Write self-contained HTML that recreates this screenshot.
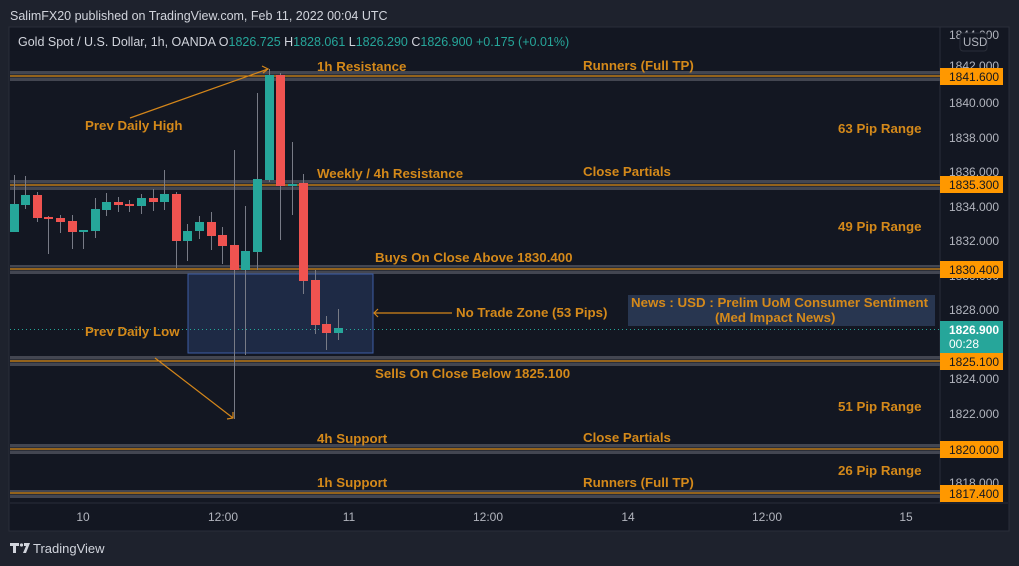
<!DOCTYPE html><html><head><meta charset="utf-8"><style>
body{margin:0;background:#1e222d;width:1019px;height:566px;overflow:hidden;font-family:"Liberation Sans",sans-serif}
svg{display:block}
</style></head><body>
<svg width="1019" height="566" xmlns="http://www.w3.org/2000/svg" font-family="Liberation Sans, sans-serif">
<rect width="1019" height="566" fill="#1e222d"/>
<text x="10" y="20" fill="#d1d4dc" font-size="12.5">SalimFX20 published on TradingView.com, Feb 11, 2022 00:04 UTC</text>
<rect x="9" y="27" width="1000" height="504" fill="#131722" stroke="#2a2e39"/>
<line x1="940" y1="27" x2="940" y2="503" stroke="#2a2e39"/>
<line x1="10" y1="503" x2="1008" y2="503" stroke="#2a2e39"/>
<text x="18" y="46" font-size="12.5" fill="#d1d4dc">Gold Spot / U.S. Dollar, 1h, OANDA  O<tspan fill="#26a69a">1826.725</tspan>  H<tspan fill="#26a69a">1828.061</tspan>  L<tspan fill="#26a69a">1826.290</tspan>  C<tspan fill="#26a69a">1826.900</tspan>  <tspan fill="#26a69a">+0.175 (+0.01%)</tspan></text>
<g>
<rect x="10" y="71" width="930" height="10" fill="#434651"/><rect x="10" y="74" width="930" height="4" fill="#2a2e39"/><line x1="10" y1="76" x2="940" y2="76" stroke="#ff9800"/>
<rect x="10" y="180" width="930" height="10" fill="#434651"/><rect x="10" y="183" width="930" height="4" fill="#2a2e39"/><line x1="10" y1="185" x2="940" y2="185" stroke="#ff9800"/>
<rect x="10" y="265" width="930" height="9" fill="#434651"/><rect x="10" y="267" width="930" height="4" fill="#2a2e39"/><line x1="10" y1="269" x2="940" y2="269" stroke="#ff9800"/>
<rect x="10" y="356" width="930" height="10" fill="#434651"/><rect x="10" y="359" width="930" height="4" fill="#2a2e39"/><line x1="10" y1="361" x2="940" y2="361" stroke="#ff9800"/>
<rect x="10" y="444" width="930" height="10" fill="#434651"/><rect x="10" y="447" width="930" height="4" fill="#2a2e39"/><line x1="10" y1="449" x2="940" y2="449" stroke="#ff9800"/>
<rect x="10" y="490" width="930" height="8" fill="#434651"/><rect x="10" y="492" width="930" height="3" fill="#2a2e39"/><line x1="10" y1="493" x2="940" y2="493" stroke="#ff9800"/>
</g>
<rect x="188" y="274" width="185" height="79" fill="#1e2a45" stroke="#3d5ea6"/>
<rect x="628" y="295" width="307" height="31" fill="#283650"/>
<line x1="10" y1="329.5" x2="940" y2="329.5" stroke="#26a69a" stroke-dasharray="1,3"/>
<g stroke="#787b86" stroke-width="1">
<line x1="14.5" y1="175" x2="14.5" y2="232"/><line x1="25.5" y1="176" x2="25.5" y2="209"/><line x1="37.5" y1="192" x2="37.5" y2="222"/><line x1="48.5" y1="216" x2="48.5" y2="254"/><line x1="60.5" y1="215" x2="60.5" y2="233"/><line x1="72.5" y1="215" x2="72.5" y2="249"/><line x1="83.5" y1="230" x2="83.5" y2="249"/><line x1="95.5" y1="198" x2="95.5" y2="238"/><line x1="106.5" y1="193" x2="106.5" y2="216"/><line x1="118.5" y1="197" x2="118.5" y2="212"/><line x1="129.5" y1="200" x2="129.5" y2="212"/><line x1="141.5" y1="194" x2="141.5" y2="214"/><line x1="153.5" y1="189" x2="153.5" y2="211"/><line x1="164.5" y1="170" x2="164.5" y2="210"/><line x1="176.5" y1="192" x2="176.5" y2="268"/><line x1="187.5" y1="224" x2="187.5" y2="261"/><line x1="199.5" y1="216" x2="199.5" y2="239"/><line x1="211.5" y1="212" x2="211.5" y2="250"/><line x1="222.5" y1="227" x2="222.5" y2="264"/><line x1="234.5" y1="150" x2="234.5" y2="419"/><line x1="245.5" y1="206" x2="245.5" y2="355"/><line x1="257.5" y1="93" x2="257.5" y2="270"/><line x1="269.5" y1="69" x2="269.5" y2="182"/><line x1="280.5" y1="73" x2="280.5" y2="240"/><line x1="292.5" y1="142" x2="292.5" y2="215"/><line x1="303.5" y1="174" x2="303.5" y2="294"/><line x1="315.5" y1="270" x2="315.5" y2="334"/><line x1="326.5" y1="316" x2="326.5" y2="350"/><line x1="338.5" y1="309" x2="338.5" y2="340"/>
</g>
<g>
<rect x="10" y="204" width="9" height="28" fill="#26a69a"/><rect x="21" y="195" width="9" height="10" fill="#26a69a"/><rect x="33" y="195" width="9" height="23" fill="#ef5350"/><rect x="44" y="217" width="9" height="2" fill="#ef5350"/><rect x="56" y="218" width="9" height="4" fill="#ef5350"/><rect x="68" y="221" width="9" height="11" fill="#ef5350"/><rect x="79" y="230" width="9" height="2" fill="#26a69a"/><rect x="91" y="209" width="9" height="22" fill="#26a69a"/><rect x="102" y="202" width="9" height="8" fill="#26a69a"/><rect x="114" y="202" width="9" height="3" fill="#ef5350"/><rect x="125" y="204" width="9" height="2" fill="#ef5350"/><rect x="137" y="198" width="9" height="8" fill="#26a69a"/><rect x="149" y="198" width="9" height="4" fill="#ef5350"/><rect x="160" y="194" width="9" height="8" fill="#26a69a"/><rect x="172" y="194" width="9" height="47" fill="#ef5350"/><rect x="183" y="231" width="9" height="10" fill="#26a69a"/><rect x="195" y="222" width="9" height="9" fill="#26a69a"/><rect x="207" y="222" width="9" height="14" fill="#ef5350"/><rect x="218" y="235" width="9" height="11" fill="#ef5350"/><rect x="230" y="245" width="9" height="25" fill="#ef5350"/><rect x="241" y="251" width="9" height="19" fill="#26a69a"/><rect x="253" y="179" width="9" height="73" fill="#26a69a"/><rect x="265" y="75" width="9" height="105" fill="#26a69a"/><rect x="276" y="75" width="9" height="111" fill="#ef5350"/><rect x="288" y="184" width="9" height="2" fill="#26a69a"/><rect x="299" y="183" width="9" height="98" fill="#ef5350"/><rect x="311" y="280" width="9" height="45" fill="#ef5350"/><rect x="322" y="324" width="9" height="9" fill="#ef5350"/><rect x="334" y="328" width="9" height="5" fill="#26a69a"/>
</g>
<g stroke="#d4861a" stroke-width="1.2" fill="none">
<line x1="130" y1="118" x2="268" y2="69"/><polyline points="262,66 268,69 263,73"/>
<line x1="155" y1="358" x2="233" y2="418"/><polyline points="227,419 233,418 233,412"/>
<line x1="452" y1="313" x2="374" y2="313"/><polyline points="378,309 374,313 378,317"/>
</g>
<g fill="#d4891a" font-size="13.3" font-weight="bold">
<text x="317" y="71">1h Resistance</text><text x="583" y="70">Runners (Full TP)</text>
<text x="85" y="130">Prev Daily High</text><text x="838" y="133">63 Pip Range</text>
<text x="317" y="178">Weekly / 4h Resistance</text><text x="583" y="176">Close Partials</text>
<text x="838" y="231">49 Pip Range</text><text x="375" y="262">Buys On Close Above 1830.400</text>
<text x="456" y="317">No Trade Zone (53 Pips)</text><text x="85" y="336">Prev Daily Low</text>
<text x="375" y="378">Sells On Close Below 1825.100</text><text x="838" y="411">51 Pip Range</text>
<text x="317" y="443">4h Support</text><text x="583" y="442">Close Partials</text>
<text x="838" y="475">26 Pip Range</text><text x="317" y="487">1h Support</text><text x="583" y="487">Runners (Full TP)</text>
<text x="631" y="307">News : USD : Prelim UoM Consumer Sentiment</text><text x="715" y="322">(Med Impact News)</text>
</g>
<g fill="#b2b5be" font-size="12">
<text x="949" y="39">1844.000</text><text x="949" y="70">1842.000</text><text x="949" y="107">1840.000</text><text x="949" y="142">1838.000</text><text x="949" y="176">1836.000</text><text x="949" y="211">1834.000</text><text x="949" y="245">1832.000</text><text x="949" y="280">1830.000</text><text x="949" y="314">1828.000</text><text x="949" y="383">1824.000</text><text x="949" y="418">1822.000</text><text x="949" y="487">1818.000</text>
</g>
<rect x="960" y="33" width="27" height="18" rx="3" fill="#131722" stroke="#2a2e39"/><text x="963" y="46" fill="#b2b5be" font-size="11.5">USD</text>
<g font-size="12" fill="#131722">
<rect x="940" y="68" width="63" height="17" fill="#ff9800"/><text x="949" y="81">1841.600</text>
<rect x="940" y="176" width="63" height="17" fill="#ff9800"/><text x="949" y="189">1835.300</text>
<rect x="940" y="261" width="63" height="17" fill="#ff9800"/><text x="949" y="274">1830.400</text>
<rect x="940" y="353" width="63" height="17" fill="#ff9800"/><text x="949" y="366">1825.100</text>
<rect x="940" y="441" width="63" height="17" fill="#ff9800"/><text x="949" y="454">1820.000</text>
<rect x="940" y="485" width="63" height="17" fill="#ff9800"/><text x="949" y="498">1817.400</text>
</g>
<rect x="940" y="321" width="63" height="32" fill="#26a69a"/><text x="949" y="334" fill="#fff" font-size="12" font-weight="bold">1826.900</text><text x="949" y="348" fill="#fff" font-size="12">00:28</text>
<g fill="#b2b5be" font-size="12" text-anchor="middle">
<text x="83" y="521">10</text><text x="223" y="521">12:00</text><text x="349" y="521">11</text><text x="488" y="521">12:00</text><text x="628" y="521">14</text><text x="767" y="521">12:00</text><text x="906" y="521">15</text>
</g>
<g fill="#d1d4dc"><path d="M10 543h9v3h-3v7h-3v-7h-3z"/><circle cx="21.5" cy="545" r="1.6"/><path d="M24 543h6l-4 10h-3l3-7h-2z"/></g>
<text x="33" y="553" fill="#d1d4dc" font-size="13">TradingView</text>
</svg>
</body></html>
